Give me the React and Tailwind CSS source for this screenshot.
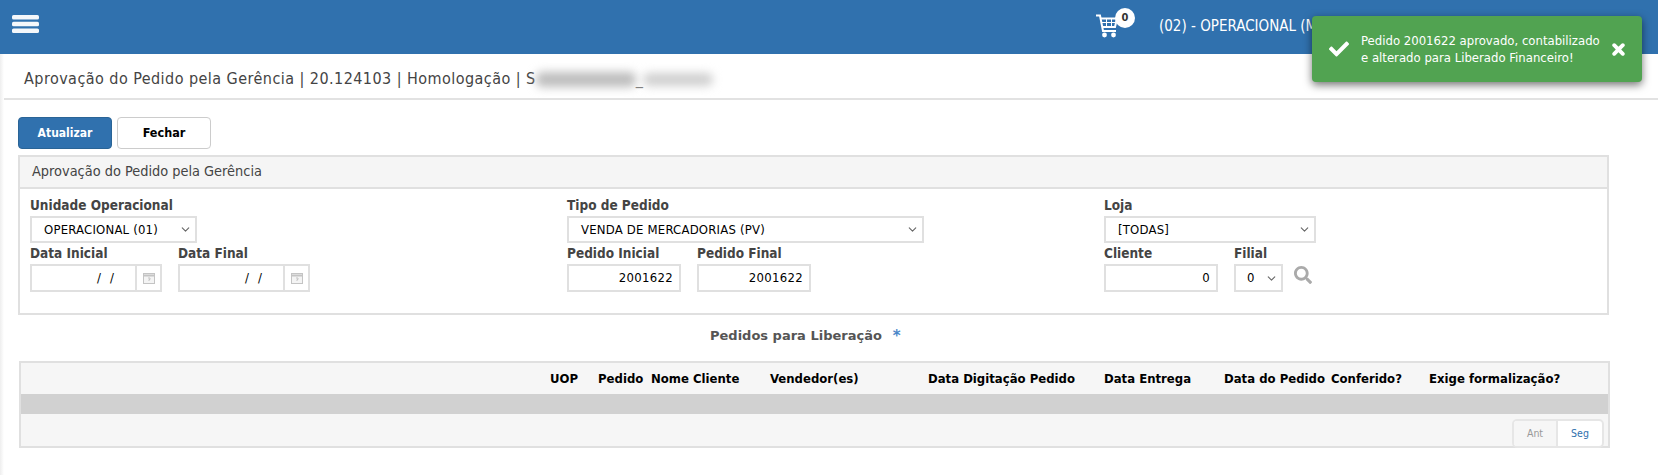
import {FaCheck, FaSearch} from "react-icons/fa";
import {ChevronDown} from "lucide-react";

const FONT = "font-['DejaVu_Sans_Condensed','DejaVu_Sans',sans-serif]";

function MenuIcon() {
  return (
      <svg width="27" height="18" viewBox="0 0 27 18" fill="white" className="ml-[12px] mt-[15px] opacity-95">
        <rect x="0" y="0" width="27" height="4.6" rx="1.6" />
        <rect x="0" y="6.7" width="27" height="4.6" rx="1.6" />
        <rect x="0" y="13.4" width="27" height="4.6" rx="1.6" />
      </svg>
  );
}

function CartIcon() {
  return (
      <svg width="22" height="24" viewBox="0 0 22 24" fill="none" stroke="white" strokeWidth="2">
        <path d="M0 1.5h4l3 15.5h13" />
        <path d="M5 4.5h16l-2 8.5H6.5" />
        <path d="M6 8.5h14" strokeWidth="1" />
        <path d="M10.5 5v8M15.5 5v8" strokeWidth="1" />
        <circle cx="8.5" cy="21" r="2.4" fill="white" stroke="none" />
        <circle cx="17.5" cy="21" r="2.4" fill="white" stroke="none" />
      </svg>
  );
}

function CalendarIcon() {
  return (
      <svg width="12" height="12" viewBox="0 0 12 12" fill="none" stroke="#c4c4c4">
        <rect x="0.5" y="1.5" width="11" height="10" fill="#f4f4f4" />
        <path d="M0.5 3.5h11" strokeWidth="2" />
        <path d="M5 6h2v1.5H6V9" />
      </svg>
  );
}

function CloseIcon() {
  return (
      <svg width="13" height="13" viewBox="0 0 13 13" stroke="white" strokeWidth="3.8" strokeLinecap="round" className="ml-[8px] shrink-0">
        <path d="M2.2 2.2l8.6 8.6M10.8 2.2l-8.6 8.6" />
      </svg>
  );
}

function Label({children}) {
  return <div className="h-[21px] text-[13.5px] leading-[20px] font-bold text-[#444]">{children}</div>;
}

function SelectBox({value, className, textClass = "pl-[12px]"}) {
  return (
      <div className={`flex h-[27px] items-center justify-between border-2 border-[#e0e0e0] bg-white text-[13px] tracking-[0.2px] text-black ${textClass} ${className}`}>
        <span>{value}</span>
        <ChevronDown size={13} strokeWidth={2} className="mr-[3px] text-[#666]" />
      </div>
  );
}

function DateField({label}) {
  return (
      <div className="w-[132px]">
        <Label>{label}</Label>
        <div className="flex h-[28px] border-2 border-[#e0e0e0] bg-white">
          <div className="flex flex-1 items-center justify-end gap-[9px] pr-[21px] text-[13px] text-black">
            <span>/</span>
            <span>/</span>
          </div>
          <div className="flex w-[25px] items-center justify-center border-l-2 border-[#e0e0e0]">
            <CalendarIcon />
          </div>
        </div>
      </div>
  );
}

function NumberField({label, value, className}) {
  return (
      <div className={className}>
        <Label>{label}</Label>
        <div className="flex h-[28px] items-center justify-end border-2 border-[#e0e0e0] bg-white pr-[6px] text-[13px] tracking-[0.3px] text-black">
          {value}
        </div>
      </div>
  );
}

const COLUMNS = [
  ["UOP", "w-[48px]"],
  ["Pedido", "w-[53px]"],
  ["Nome Cliente", "w-[119px]"],
  ["Vendedor(es)", "w-[158px]"],
  ["Data Digitação Pedido", "w-[176px]"],
  ["Data Entrega", "w-[120px]"],
  ["Data do Pedido", "w-[107px]"],
  ["Conferido?", "w-[98px]"],
  ["Exige formalização?", "w-[140px]"],
];

export default function App() {
  return (
      <div className={`relative h-[475px] w-[1658px] overflow-hidden bg-white ${FONT}`}>
        <header className="flex h-[54px] items-start justify-between bg-[#3071ae] text-white">
          <MenuIcon />
          <div className="mr-[231px] flex items-start">
            <div className="relative mt-[14px] mr-[41px]">
              <CartIcon />
              <span className="absolute -top-[6px] left-[19px] flex h-[20px] w-[20px] items-center justify-center rounded-full bg-white text-[11px] font-bold text-[#333]">
                0
              </span>
            </div>
            <span className="mt-[17px] w-[268px] whitespace-nowrap text-[15px] leading-[18px]">(02) - OPERACIONAL (MATRIZ)</span>
          </div>
        </header>

        <div className="flex h-[46px] items-center border-b-2 border-[#e2e2e2] pl-[24px] pt-[6px] text-[16px] tracking-[0.45px] text-[#444]">
          <span>Aprovação do Pedido pela Gerência | 20.124103 | Homologação | S</span>
          <span className="h-[15px] w-[100px] rounded-[6px] bg-[#bdbdbd] blur-[5px]" />
          <span className="text-[#777]">_</span>
          <span className="h-[13px] w-[70px] rounded-[6px] bg-[#cfcfcf] blur-[5px]" />
        </div>

        <main className="pl-[18px]">
          <div className="flex gap-[5px] pt-[17px]">
            <button className="h-[32px] w-[94px] rounded-[4px] border border-[#2a6496] bg-[#3071ae] text-[12px] font-bold text-white">Atualizar</button>
            <button className="h-[32px] w-[94px] rounded-[4px] border border-[#ccc] bg-white text-[12.5px] font-bold text-black">Fechar</button>
          </div>

          <section className="mt-[6px] h-[160px] w-[1591px] border-2 border-[#e0e0e0]">
            <div className="flex h-[32px] items-center border-b-2 border-[#e0e0e0] bg-[#f5f5f5] pl-[12px] text-[14.4px] text-[#444]">
              Aprovação do Pedido pela Gerência
            </div>
            <div className="flex items-start pl-[10px] pt-[6px]">
              <div className="w-[537px]">
                <Label>Unidade Operacional</Label>
                <SelectBox value="OPERACIONAL (01)" className="w-[167px]" />
                <div className="flex gap-[16px]">
                  <DateField label="Data Inicial" />
                  <DateField label="Data Final" />
                </div>
              </div>
              <div className="w-[537px]">
                <Label>Tipo de Pedido</Label>
                <SelectBox value="VENDA DE MERCADORIAS (PV)" className="w-[357px]" />
                <div className="flex gap-[16px]">
                  <NumberField label="Pedido Inicial" value="2001622" className="w-[114px]" />
                  <NumberField label="Pedido Final" value="2001622" className="w-[114px]" />
                </div>
              </div>
              <div>
                <Label>Loja</Label>
                <SelectBox value="[TODAS]" className="w-[212px]" />
                <div className="flex items-end">
                  <NumberField label="Cliente" value="0" className="w-[114px]" />
                  <div className="ml-[16px] w-[49px]">
                    <Label>Filial</Label>
                    <SelectBox value="0" className="h-[28px] w-[49px]" textClass="pl-[11px]" />
                  </div>
                  <FaSearch className="mb-[8px] ml-[11px] h-[18px] w-[18px] text-[#aaa]" />
                </div>
              </div>
            </div>
          </section>

          <h2 className="mt-[11px] flex h-[20px] w-[1591px] items-center pl-[692px] font-['DejaVu_Sans',sans-serif] text-[13px] font-bold text-[#555]">
            Pedidos para Liberação
            <span className="ml-[11px] text-[15px] text-[#4a86c8]">*</span>
          </h2>

          <section className="relative mt-[15px] ml-[1px] h-[87px] w-[1591px] border-2 border-[#e0e0e0] bg-[#f6f6f6]">
            <div className="flex h-[31px] items-center pl-[529px] text-[13px] font-bold text-black">
              {COLUMNS.map(([name, width]) => (
                  <div key={name} className={`${width} shrink-0 whitespace-nowrap`}>{name}</div>
              ))}
            </div>
            <div className="h-[20px] bg-[#d1d1d1]" />
            <div className="absolute -bottom-[2px] right-[4px] flex h-[29px] w-[92px] overflow-hidden rounded-[5px] border-2 border-[#e6e6e6] bg-white text-[10.5px]">
              <div className="flex w-[44px] items-center justify-center border-r-2 border-[#e6e6e6] bg-[#f6f6f6] text-[#999]">Ant</div>
              <div className="flex flex-1 items-center justify-center text-[#3071ae]">Seg</div>
            </div>
          </section>
        </main>

        <div className="pointer-events-none absolute bottom-0 left-0 top-[54px] w-[4px] bg-gradient-to-r from-[#eee] to-white" />

        <div className="absolute left-[1312px] top-[16px] flex h-[66px] w-[330px] items-center rounded-[4px] bg-[#51a351] pl-[17px] text-white shadow-[0_3px_9px_rgba(0,0,0,0.55)]">
          <FaCheck className="h-[20px] w-[20px] shrink-0" />
          <p className="ml-[12px] w-[243px] text-[13px] leading-[17px]">
            Pedido 2001622 aprovado, contabilizado e alterado para Liberado Financeiro!
          </p>
          <CloseIcon />
        </div>
      </div>
  );
}
